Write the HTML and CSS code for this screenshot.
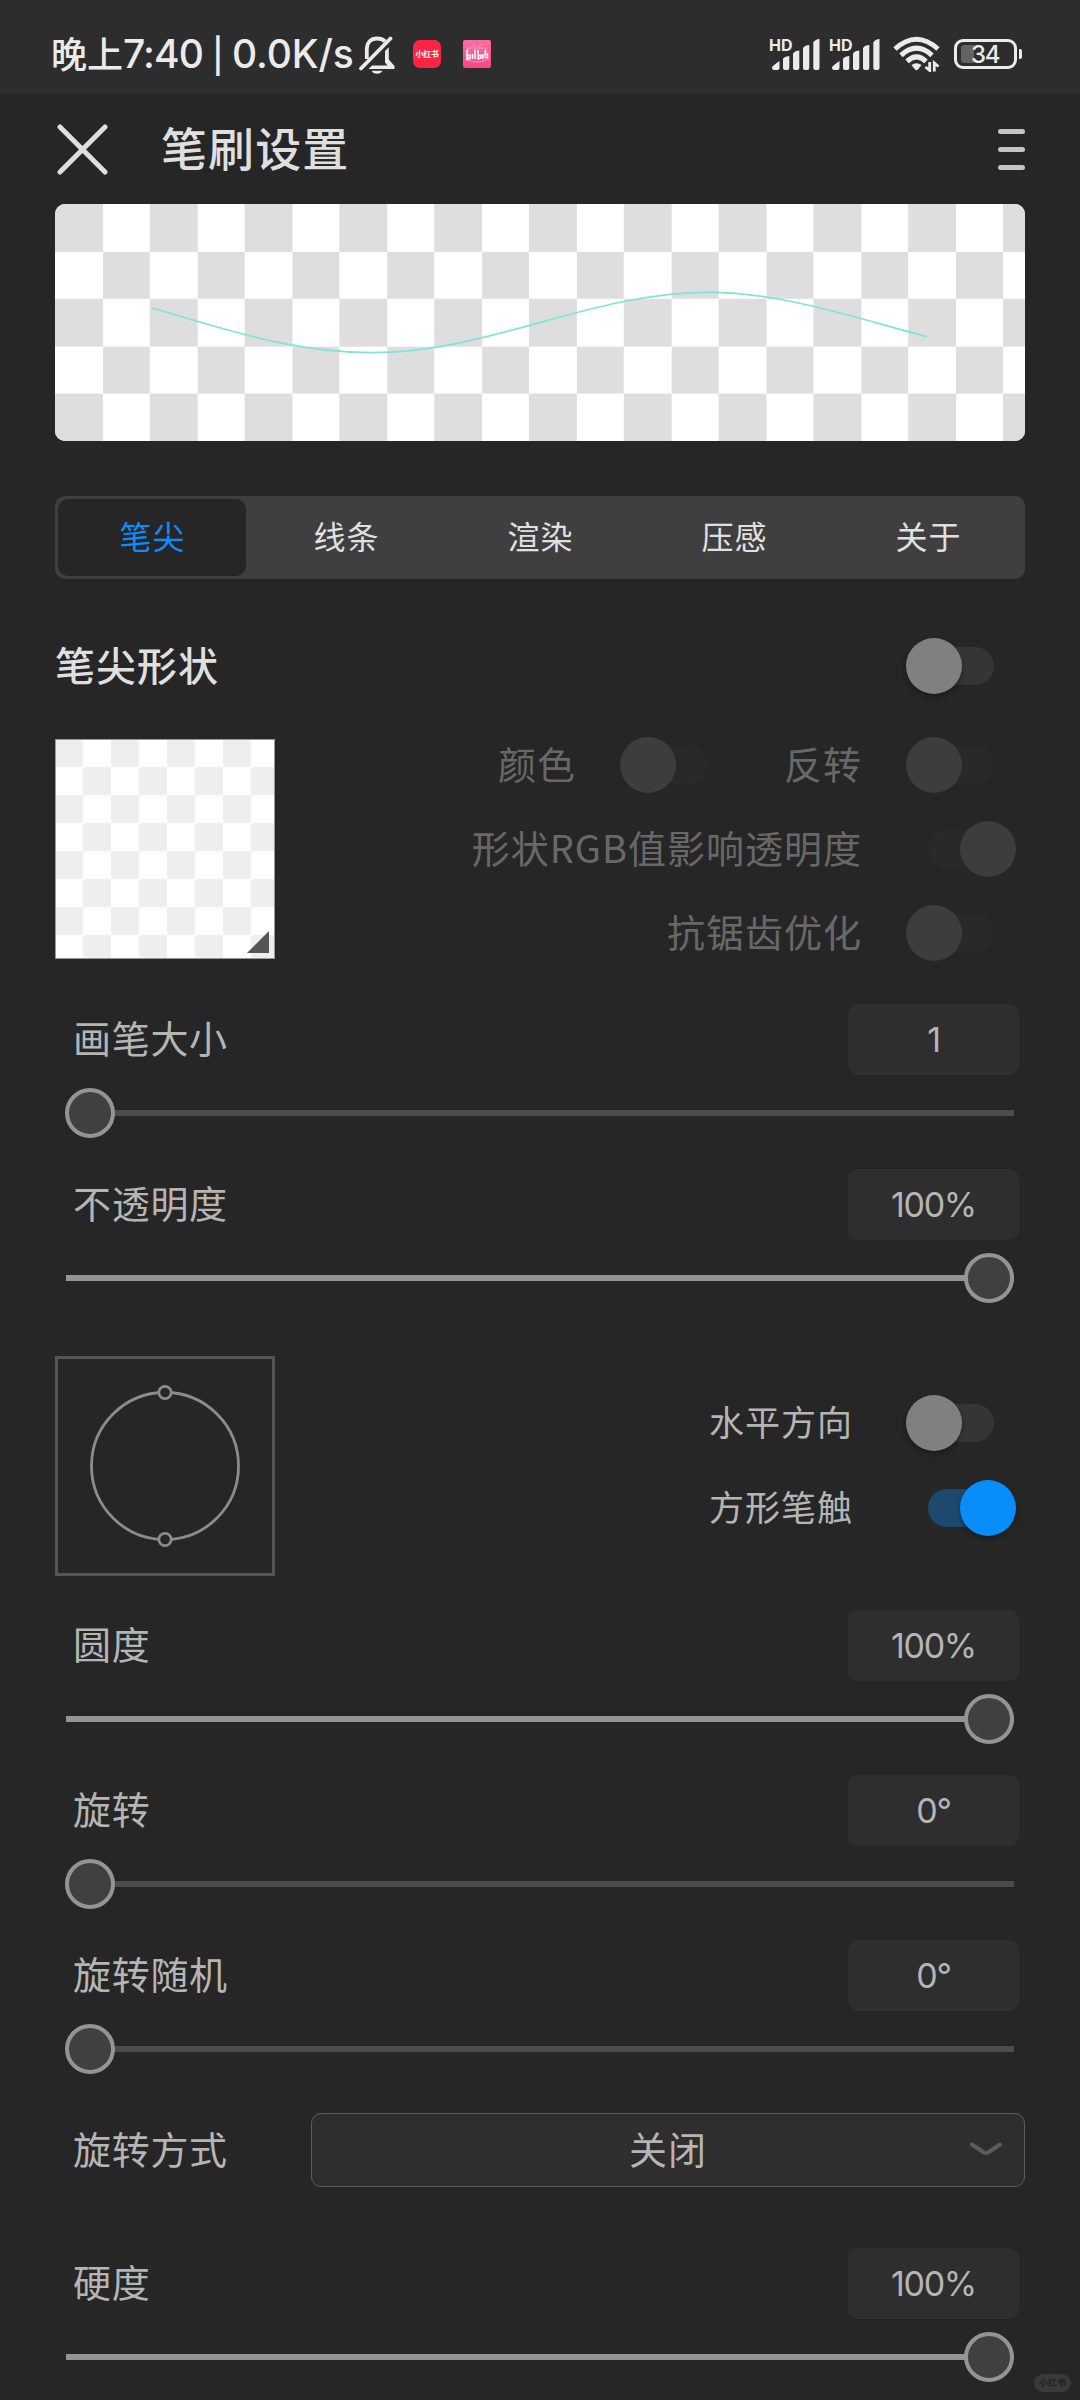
FILE: index.html
```html
<!DOCTYPE html>
<html lang="zh-CN">
<head>
<meta charset="utf-8">
<title>笔刷设置</title>
<link rel="stylesheet" href="styles.css">
</head>
<body>
<div class="statusbar">
  <div class="clock"><span class="clock-cjk">晚上</span><span class="clock-time">7:40</span><span class="clock-sep">|</span><span class="clock-net">0.0K/s</span></div>
  <svg class="bell" width="37" height="40" viewBox="0 0 37 40">
    <g fill="none" stroke="#ebebeb" stroke-width="3.8">
      <path d="M7.800 24 V15 C7.800 7 12 3.500 18 3.500 C21.500 3.500 24 4.500 26 6.300"/>
      <path d="M2 33.500 L31.500 3.500" stroke-linecap="round"/>
    </g>
    <path d="M26 16 L29.800 12.200 V24.500 L35.500 31 V34 H9.500 L13 30.400 H28.500 L26 27.500 Z" fill="#ebebeb"/>
    <path d="M12.500 35.800 H23.500 A6 5 0 0 1 12.500 35.800 Z" fill="#ebebeb"/>
  </svg>
  <div class="app app-red">小红书</div>
  <div class="app app-pink"><svg width="28" height="28" viewBox="0 0 28 28" fill="none" stroke="#fff"><path d="M10 4 l2 3 M18 4 l-2 3 M5 8 h18 v12 q-9 4 -18 0z" stroke="#ff9dbf" stroke-width="1"/><path d="M4 9.500 V19.500 L7 18.500 V15 L4.500 16 M9.500 14 V19 M12 9.500 V19 M15 10 V19 L18 18 V15 L15.500 16 M20 14 V19 M22.300 10 V18 M24.500 13 V19" stroke-width="1.500"/></svg></div>
  <div class="spacer"></div>
  <div class="signal"><span class="hd">HD</span><svg width="50" height="34" viewBox="0 0 50 34" fill="#ebebeb"><path d="M2 32v-2.500q0-1.500 7.500-6.500V30q0 2-2 2H4q-2 0-2-2z"/><path d="M13 20.500q2-2.500 6.300-2.500V30q0 2-2 2H15q-2 0-2-2z"/><path d="M23 15.500q2-3 6.300-3V30q0 2-2 2H25q-2 0-2-2z"/><path d="M33 10q2-3 6.300-3V30q0 2-2 2H35q-2 0-2-2z"/><path d="M43.300 4.500q2-3.500 6.200-3.500V30q0 2-2 2h-2.200q-2 0-2-2z"/></svg></div>
  <div class="signal"><span class="hd">HD</span><svg width="50" height="34" viewBox="0 0 50 34" fill="#ebebeb"><path d="M2 32v-2.500q0-1.500 7.500-6.500V30q0 2-2 2H4q-2 0-2-2z"/><path d="M13 20.500q2-2.500 6.300-2.500V30q0 2-2 2H15q-2 0-2-2z"/><path d="M23 15.500q2-3 6.300-3V30q0 2-2 2H25q-2 0-2-2z"/><path d="M33 10q2-3 6.300-3V30q0 2-2 2H35q-2 0-2-2z"/><path d="M43.300 4.500q2-3.500 6.200-3.500V30q0 2-2 2h-2.200q-2 0-2-2z"/></svg></div>
  <svg class="wifi" width="48" height="36" viewBox="0 0 48 36">
    <g fill="none" stroke="#ebebeb" stroke-width="5">
      <path d="M2 13 Q23.500 -6.500 45 13"/>
      <path d="M8 19.300 Q23.500 5 39 19.300"/>
      <path d="M14 25.300 Q23.500 16.500 33 25.300"/>
    </g>
    <path d="M18.500 29 Q23.500 25.500 28.500 29 L25 33.500 Q23.500 35 22 33.500 Z" fill="#ebebeb"/>
    <g fill="none" stroke="#ebebeb" stroke-width="2.800"><path d="M36.700 26 V34.500 L32.500 31 M41.300 35.500 V27 L45.500 30.500"/></g>
  </svg>
  <div class="battery"><div class="level"></div><span class="charge">34</span></div>
  <div class="nub"></div>
</div>

<header class="header">
  <svg class="close" width="51" height="51" viewBox="0 0 51 51" stroke="#dfdfdf" stroke-width="5" stroke-linecap="round"><path d="M3 3 L48 48 M48 3 L3 48"/></svg>
  <h1>笔刷设置</h1>
  <div class="menu"><i></i><i></i><i></i></div>
</header>

<main>
  <div class="preview">
    <svg width="970" height="237" viewBox="55 204 970 237" fill="none">
      <defs><pattern id="checker" x="55" y="204" width="94.800" height="94.800" patternUnits="userSpaceOnUse"><path d="M0 0h47.400v47.400h-47.400zM47.400 47.400h47.400v47.400h-47.400z" fill="#dedede" shape-rendering="crispEdges"/></pattern></defs>
      <rect x="55" y="204" width="970" height="237" fill="url(#checker)"/>
      <path d="M152 308 C222 328 290 352.700 372 352.700 C490 352.700 590 292.300 709 292.300 C782 292.300 855 318 927 336.500" stroke="#7fe3dc" stroke-width="1.700"/>
    </svg>
  </div>

  <nav class="tabs">
    <div class="tab active">笔尖</div>
    <div class="tab">线条</div>
    <div class="tab">渲染</div>
    <div class="tab">压感</div>
    <div class="tab">关于</div>
  </nav>

  <div class="section-head"><h2>笔尖形状</h2><div class="switch"></div></div>

  <div class="shape">
    <div class="swatch"><div class="corner"></div></div>
    <div class="options disabled">
      <div class="option"><span>颜色</span><div class="switch mid"></div><span>反转</span><div class="switch"></div></div>
      <div class="option"><span>形状RGB值影响透明度</span><div class="switch on"></div></div>
      <div class="option"><span>抗锯齿优化</span><div class="switch"></div></div>
    </div>
  </div>

  <div class="setting"><div class="line"><label>画笔大小</label><output>1</output></div><div class="slider"><div class="thumb"></div></div></div>
  <div class="setting"><div class="line"><label>不透明度</label><output>100%</output></div><div class="slider full"><div class="thumb"></div></div></div>

  <div class="tilt">
    <svg class="dial" width="220" height="220" viewBox="0 0 220 220" fill="none">
      <rect x="1.500" y="1.500" width="217" height="217" stroke="#555" stroke-width="3"/>
      <circle cx="110" cy="110" r="73.500" stroke="#8c8c8c" stroke-width="2.800"/>
      <circle cx="110" cy="36.500" r="6.200" fill="#262626" stroke="#8c8c8c" stroke-width="2.800"/>
      <circle cx="110" cy="183.500" r="6.200" fill="#262626" stroke="#8c8c8c" stroke-width="2.800"/>
    </svg>
    <div class="options compact">
      <div class="option"><span>水平方向</span><div class="switch"></div></div>
      <div class="option"><span>方形笔触</span><div class="switch on"></div></div>
    </div>
  </div>

  <div class="setting"><div class="line"><label>圆度</label><output>100%</output></div><div class="slider full"><div class="thumb"></div></div></div>
  <div class="setting"><div class="line"><label>旋转</label><output>0°</output></div><div class="slider"><div class="thumb"></div></div></div>
  <div class="setting"><div class="line"><label>旋转随机</label><output>0°</output></div><div class="slider"><div class="thumb"></div></div></div>

  <div class="mode">
    <label>旋转方式</label>
    <div class="select"><span>关闭</span><svg width="34" height="18" viewBox="0 0 34 18" fill="none" stroke="#5c5c5c" stroke-width="4" stroke-linecap="round" stroke-linejoin="round"><path d="M3 3.500 L15 11.500 Q17 12.500 19 11.500 L31 3.500"/></svg></div>
  </div>

  <div class="setting"><div class="line"><label>硬度</label><output>100%</output></div><div class="slider full"><div class="thumb"></div></div></div>
</main>
<div class="watermark">小红书</div>
</body>
</html>
```
FILE: styles.css
```css
* { box-sizing: border-box; }
body {
  position: relative;
  margin: 0;
  width: 1080px;
  height: 2400px;
  overflow: hidden;
  background: #262626;
  color: #b5b5b5;
  font-family: "Noto Sans CJK SC", "Noto Sans", sans-serif;
}

/* status bar */
.statusbar {
  display: flex;
  align-items: flex-start;
  height: 94px;
  padding: 0 58px 0 51px;
  background: #2d2d2d;
  color: #ebebeb;
}
.clock {
  display: flex;
  align-items: baseline;
  width: 308px;
  margin-top: 22px;
  line-height: 60px;
  white-space: nowrap;
  font-family: Inter, "Noto Sans CJK SC", sans-serif;
  font-weight: 500;
  font-size: 39px;
}
.clock-cjk { width: 72px; font-size: 36px; font-family: "Noto Sans CJK SC", sans-serif; }
.clock-time { width: 89px; letter-spacing: -0.9px; }
.clock-sep { width: 20px; font-size: 34px; }
.clock-net { letter-spacing: -0.1px; }
.bell { margin-top: 35px; }
.app { width: 28px; height: 28px; margin-top: 40px; overflow: hidden; }
.app-red {
  margin-left: 17px;
  border-radius: 7px;
  background: #ff2442;
  color: #fff;
  text-align: center;
  font-weight: 700;
  font-size: 8px;
  line-height: 28px;
  letter-spacing: -0.4px;
}
.app-pink { margin-left: 22px; border-radius: 2px; background: linear-gradient(#f76fa4, #fb4585); }
.spacer { flex: 1; }
.signal { position: relative; width: 60px; height: 34px; margin-top: 38px; }
.hd {
  position: absolute;
  left: -1px;
  top: -1px;
  font: 700 16px/16px Inter, sans-serif;
}
.wifi { margin: 36px 13px 0 3px; }
.battery {
  display: flex;
  width: 63px;
  height: 30px;
  margin-top: 39px;
  padding: 3px 4px;
  border: 3px solid #ebebeb;
  border-radius: 9px;
}
.level { width: 13px; height: 18px; border-radius: 3px 0 0 3px; background: #636363; }
.charge { margin-left: -3px; font: 500 24px/19px Inter, sans-serif; letter-spacing: -1.4px; }
.nub { width: 3px; height: 10px; margin: 49px 0 0 2px; border-radius: 0 2px 2px 0; background: #ebebeb; }

/* header */
.header { display: flex; align-items: center; height: 110px; padding: 0 55px 0 57px; }
h1 { flex: 1; margin: -6px 0 0 53px; font-size: 46px; font-weight: 500; letter-spacing: 1.1px; color: #dfdfdf; }
.menu { display: flex; flex-direction: column; gap: 13px; width: 27px; }
.menu i { height: 5px; border-radius: 3px; background: #c4c4c4; }

main { padding: 0 55px; }
.preview { height: 237px; overflow: hidden; border-radius: 10px; background: #fff; }
.preview svg { display: block; }

.tabs { display: flex; height: 83px; margin-top: 55px; border-radius: 10px; background: #3f3f3f; }
.tab {
  flex: 1;
  margin: 3px;
  padding-left: 1px;
  border-radius: 10px;
  line-height: 73px;
  text-align: center;
  font-size: 32px;
  letter-spacing: 1px;
  color: #e0e0e0;
}
.tab.active { background: #262626; color: #0a8ffa; }

.section-head { display: flex; align-items: center; justify-content: space-between; height: 84px; margin-top: 45px; }
h2 { margin: -5px 0 0; font-size: 40px; font-weight: 500; letter-spacing: 1px; color: #dfdfdf; }

/* switches */
.switch { position: relative; width: 66px; height: 38px; margin-right: 31px; border-radius: 19px; background: #353535; }
.switch::after {
  content: "";
  position: absolute;
  left: -22px;
  top: -9px;
  width: 56px;
  height: 56px;
  border-radius: 50%;
  background: #808080;
  box-shadow: 0 3px 5px rgba(0, 0, 0, 0.3);
}
.switch.on { background: #1d496e; }
.switch.on::after { left: 32px; background: #078efb; }
.disabled .switch { background: #292929; }
.disabled .switch::after { background: #3d3d3d; box-shadow: none; }
.switch.mid { margin-right: 76px; }

.shape { display: flex; justify-content: space-between; height: 220px; margin-top: 31px; }
.swatch {
  position: relative;
  width: 220px;
  height: 220px;
  border: 1px solid #999;
  background: repeating-conic-gradient(#fff 0 25%, #eee 0 50%) -1px -1px / 56px 56px;
}
.corner { position: absolute; right: 5px; bottom: 5px; width: 22px; height: 22px; background: #555; clip-path: polygon(100% 0, 100% 100%, 0 100%); }
.options { display: flex; flex-direction: column; align-items: flex-end; margin-top: -16px; }
.option { display: flex; flex-shrink: 0; align-items: center; height: 84px; font-size: 38px; letter-spacing: 1px; white-space: nowrap; }
.option span { margin-top: -5px; margin-right: 66px; }
.disabled { color: #686868; }
.compact { margin-top: 24px; }
.compact .option { height: 85px; font-size: 35px; }
.compact .option span { margin-right: 75px; }

/* value rows */
label, output { font-size: 38px; letter-spacing: 0.7px; }
.setting { height: 165px; }
.shape + .setting { margin-top: 45px; }
.line { display: flex; align-items: center; justify-content: space-between; height: 71px; padding: 0 6px 0 18px; }
.line label { margin-top: -6px; }
output {
  width: 171px;
  height: 71px;
  border-radius: 10px;
  background: #2e2e2e;
  text-align: center;
  font: 400 34px/71px Inter, sans-serif;
  letter-spacing: -1.3px;
}
.slider {
  display: flex;
  align-items: center;
  width: 949px;
  height: 50px;
  margin: 13px 0 0 10px;
  background: linear-gradient(#4c4c4c, #4c4c4c) 1px 22px / 948px 6px no-repeat;
}
.slider.full { justify-content: flex-end; background-image: linear-gradient(#949494, #949494); }
.thumb { width: 50px; height: 50px; border: 4px solid #949494; border-radius: 50%; background: #404040; }

.tilt { display: flex; justify-content: space-between; height: 254px; margin-top: 22px; }
.dial { display: block; }

.mode { display: flex; align-items: center; justify-content: space-between; height: 74px; margin: 8px 0 61px; padding-left: 18px; }
.mode label { margin-top: -6px; }
.select {
  display: flex;
  align-items: center;
  width: 714px;
  height: 74px;
  padding: 0 21px 0 55px;
  border: 1px solid #5c5c5c;
  border-radius: 10px;
  background: #2e2e2e;
}
.select span { flex: 1; margin-top: -6px; text-align: center; font-size: 38px; letter-spacing: 1px; }

.watermark {
  position: absolute;
  left: 1034px;
  top: 2374px;
  width: 37px;
  height: 18px;
  border-radius: 9px;
  background: #3a3a3a;
  color: #222;
  text-align: center;
  font-size: 9px;
  font-weight: 700;
  line-height: 18px;
}
```
